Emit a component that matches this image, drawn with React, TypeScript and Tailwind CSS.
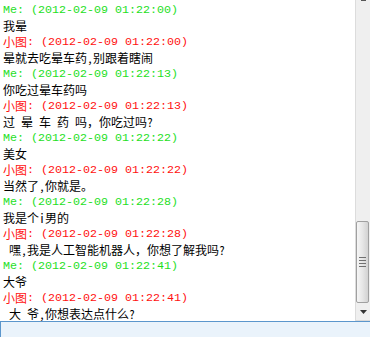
const mono = "font-['Liberation_Mono',monospace] text-[11.67px]";
const cjk = "font-['Noto_Sans_Mono_CJK_SC','Noto_Sans_CJK_SC',sans-serif] text-[12px]";

type Msg = { me: boolean; time: string; text: string };

const msgs: Msg[] = [
  { me: true, time: "01:22:00", text: "我晕" },
  { me: false, time: "01:22:00", text: "晕就去吃晕车药,别跟着瞎闹" },
  { me: true, time: "01:22:13", text: "你吃过晕车药吗" },
  { me: false, time: "01:22:13", text: "过 晕 车 药 吗，你吃过吗?" },
  { me: true, time: "01:22:22", text: "美女" },
  { me: false, time: "01:22:22", text: "当然了,你就是。" },
  { me: true, time: "01:22:28", text: "我是个i男的" },
  { me: false, time: "01:22:28", text: " 嘿,我是人工智能机器人，你想了解我吗?" },
  { me: true, time: "01:22:41", text: "大爷" },
  { me: false, time: "01:22:41", text: " 大 爷,你想表达点什么?" },
];

function Header({ me, time }: { me: boolean; time: string }) {
  return (
    <div className={`h-4 leading-4 whitespace-pre flex items-center ${me ? "text-[#1ee01e]" : "text-[#ff1010]"}`}>
      {me ? <span className={mono}>Me</span> : <span className={cjk}>小图</span>}
      <span className={mono}>{`: (2012-02-09 ${time})`}</span>
    </div>
  );
}

export default function App() {
  return (
    <div className="w-[370px] h-[337px] flex flex-col bg-white overflow-hidden">
      <div className="flex h-[321px]">
        <div className="flex-1 pt-[2px] pl-[3px] overflow-hidden">
          {msgs.map((m, i) => (
            <div key={i}>
              <Header me={m.me} time={m.time} />
              <div className={`h-4 leading-4 whitespace-pre text-black ${cjk}`}>{m.text}</div>
            </div>
          ))}
        </div>
        <div className="w-[15px] flex flex-col bg-[#efefef] border-l border-[#dcdcdc]">
          <div className="h-[3px] flex justify-center">
            <div className="w-[5px] h-[1px] bg-[#555]" />
          </div>
          <div className="flex-1" />
          <div className="h-[82px] w-[13px] rounded-[2px] border border-[#a0a0a0] bg-gradient-to-r from-[#f6f6f6] via-[#e6e6e6] to-[#d2d2d2] flex flex-col items-center justify-center gap-[2px]">
            <div className="w-[7px] h-[1px] bg-[#707070]" />
            <div className="w-[7px] h-[1px] bg-[#707070]" />
            <div className="w-[7px] h-[1px] bg-[#707070]" />
            <div className="w-[7px] h-[1px] bg-[#707070]" />
          </div>
          <div className="h-[18px] flex items-center justify-center border-b border-[#dadada]">
            <svg width="7" height="4" viewBox="0 0 7 4">
              <path d="M0 0H7L3.5 4Z" fill="#333" />
            </svg>
          </div>
        </div>
      </div>
      <div className="flex-1 border-t border-l border-[#5b96cc] bg-[#eaf3fb]" />
    </div>
  );
}
